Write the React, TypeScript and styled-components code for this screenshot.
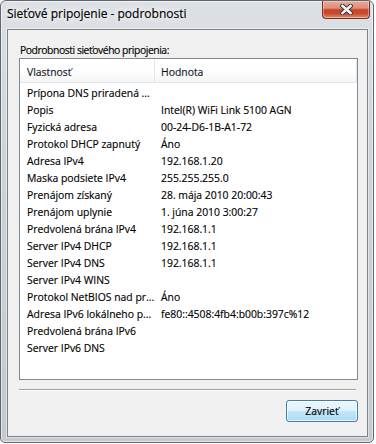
import styled, { createGlobalStyle } from "styled-components";

const GlobalStyle = createGlobalStyle`
  html, body {
    margin: 0;
    padding: 0;
    background: #ffffff;
  }
  body {
    font-family: "Segoe UI", "Open Sans", "Noto Sans", sans-serif;
    color: #000000;
  }
`;

// okno dialógu
const Window = styled.div`
  box-sizing: border-box;
  width: 374px;
  height: 443px;
  display: flex;
  flex-direction: column;
  border: 1px solid #5f666d;
  border-radius: 6px 6px 5px 5px;
  background: linear-gradient(180deg, #dde1e5 0%, #cfd4d9 30%, #c4c9ce 100%);
  box-shadow: inset 0 0 0 1px rgba(255, 255, 255, 0.55);
  overflow: hidden;
`;

const TitleBar = styled.div`
  display: flex;
  align-items: flex-start;
  height: 28px;
  flex-shrink: 0;
  padding: 0 3px 0 6px;
`;

const Title = styled.div`
  margin-top: 5px;
  font-size: 12px;
  line-height: 16px;
  white-space: nowrap;
  -webkit-text-stroke: 0.15px #000000;
  text-shadow: 0 0 6px #ffffff, 0 0 10px #ffffff, 0 0 16px rgba(255, 255, 255, 0.9);
`;

const CloseButton = styled.div`
  margin-left: auto;
  box-sizing: border-box;
  width: 48px;
  height: 18px;
  display: flex;
  align-items: center;
  justify-content: center;
  border: 1px solid #7a3026;
  border-top: none;
  border-radius: 0 0 4px 4px;
  background: linear-gradient(
    180deg,
    #e9ab9c 0%,
    #de8c78 42%,
    #c6442b 52%,
    #c94b31 75%,
    #e3906f 100%
  );
  box-shadow: inset 0 0 0 1px rgba(255, 255, 255, 0.35);
`;

const Client = styled.div`
  flex: 1;
  display: flex;
  flex-direction: column;
  margin: 0 5px 5px 6px;
  padding: 13px 9px 14px 11px;
  border: 1px solid #7b828a;
  background: #f0f0f0;
  box-shadow: 0 0 0 1px rgba(255, 255, 255, 0.45);
  font-size: 10.4px;
  -webkit-text-stroke: 0.15px #000000;
`;

const Label = styled.div`
  line-height: 15px;
  padding-left: 1px;
  letter-spacing: -0.45px;
  white-space: nowrap;
`;

const ListBox = styled.div`
  flex: 1;
  display: flex;
  flex-direction: column;
  border: 1px solid #828790;
  background: #ffffff;
  overflow: hidden;
`;

const Header = styled.div`
  display: flex;
  height: 23px;
  flex-shrink: 0;
  border-bottom: 1px solid #e2e5ea;
  background: linear-gradient(180deg, #ffffff 0%, #ffffff 45%, #f4f5f7 100%);
`;

const HeaderCell = styled.div<{ $width?: number; $pad: number }>`
  box-sizing: border-box;
  ${(p) => (p.$width ? `width: ${p.$width}px;` : "flex: 1;")}
  padding: 5px 0 0 ${(p) => p.$pad}px;
  line-height: 17px;
  color: #1a2433;
  border-right: 1px solid #e3e7ec;
  white-space: nowrap;
`;

const Rows = styled.div`
  padding-top: 2px;
`;

const Row = styled.div`
  display: flex;
  height: 17px;
  line-height: 17px;
`;

const Cell = styled.div<{ $width?: number; $pad: number }>`
  box-sizing: border-box;
  ${(p) => (p.$width ? `width: ${p.$width}px;` : "flex: 1;")}
  padding-left: ${(p) => p.$pad}px;
  white-space: nowrap;
  overflow: hidden;
`;

const Separator = styled.div`
  margin: 9px 2px 0 0;
  border-top: 1px solid #a0a0a0;
  border-bottom: 1px solid #ffffff;
`;

const ButtonRow = styled.div`
  display: flex;
  justify-content: flex-end;
  margin-top: 9px;
`;

const Button = styled.button`
  box-sizing: border-box;
  width: 72px;
  height: 22px;
  padding: 0;
  border: 1px solid #3c7fb1;
  border-radius: 3px;
  background: linear-gradient(180deg, #ecf7fd 0%, #dcf1fc 48%, #c3e6f9 52%, #add9f2 100%);
  box-shadow: inset 0 0 0 1px rgba(255, 255, 255, 0.7);
  font-family: inherit;
  font-size: 10.4px;
  line-height: 20px;
  color: #000000;
  -webkit-text-stroke: 0.15px #000000;
`;

const COL1 = 135;

const rows: [string, string][] = [
  ["Prípona DNS priradená ...", ""],
  ["Popis", "Intel(R) WiFi Link 5100 AGN"],
  ["Fyzická adresa", "00-24-D6-1B-A1-72"],
  ["Protokol DHCP zapnutý", "Áno"],
  ["Adresa IPv4", "192.168.1.20"],
  ["Maska podsiete IPv4", "255.255.255.0"],
  ["Prenájom získaný", "28. mája 2010 20:00:43"],
  ["Prenájom uplynie", "1. júna 2010 3:00:27"],
  ["Predvolená brána IPv4", "192.168.1.1"],
  ["Server IPv4 DHCP", "192.168.1.1"],
  ["Server IPv4 DNS", "192.168.1.1"],
  ["Server IPv4 WINS", ""],
  ["Protokol NetBIOS nad pr...", "Áno"],
  ["Adresa IPv6 lokálneho p...", "fe80::4508:4fb4:b00b:397c%12"],
  ["Predvolená brána IPv6", ""],
  ["Server IPv6 DNS", ""],
];

const CloseIcon = () => (
  <svg width="13" height="11" viewBox="0 0 13 11">
    <path d="M2.5 2 L10.5 9 M10.5 2 L2.5 9" stroke="#3a3a3a" strokeWidth="4.6" strokeLinecap="square" />
    <path d="M2.5 2 L10.5 9 M10.5 2 L2.5 9" stroke="#f4f4f4" strokeWidth="2.6" strokeLinecap="square" />
  </svg>
);

const App = () => {
  return (
    <>
      <GlobalStyle />
      <Window>
        <TitleBar>
          <Title>Sieťové pripojenie - podrobnosti</Title>
          <CloseButton>
            <CloseIcon />
          </CloseButton>
        </TitleBar>
        <Client>
          <Label>Podrobnosti sieťového pripojenia:</Label>
          <ListBox>
            <Header>
              <HeaderCell $width={COL1} $pad={7}>
                Vlastnosť
              </HeaderCell>
              <HeaderCell $pad={6}>Hodnota</HeaderCell>
            </Header>
            <Rows>
              {rows.map(([name, value]) => (
                <Row key={name}>
                  <Cell $width={COL1} $pad={7}>
                    {name}
                  </Cell>
                  <Cell $pad={6}>{value}</Cell>
                </Row>
              ))}
            </Rows>
          </ListBox>
          <Separator />
          <ButtonRow>
            <Button>Zavrieť</Button>
          </ButtonRow>
        </Client>
      </Window>
    </>
  );
};

export default App;
